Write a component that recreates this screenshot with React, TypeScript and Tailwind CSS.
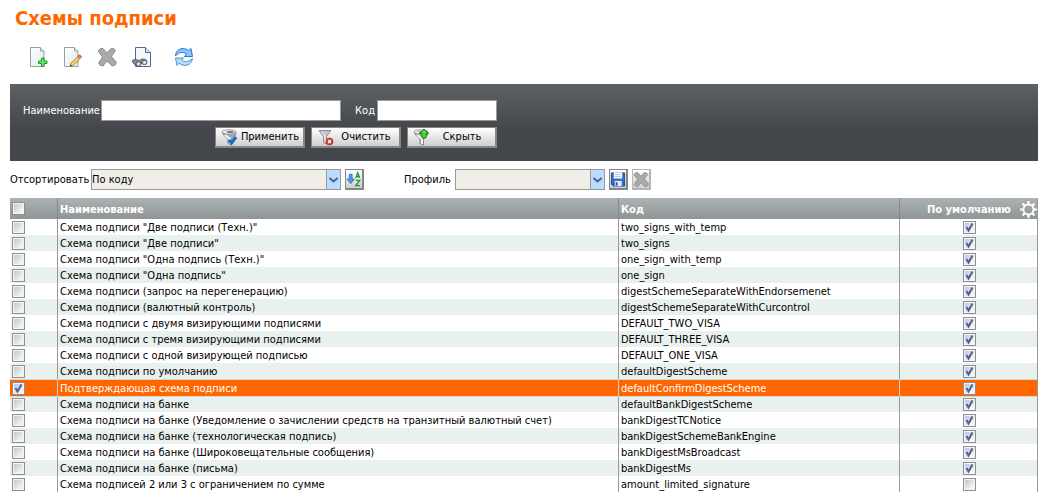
import React from "react";

const rows = [
  { name: 'Схема подписи "Две подписи (Техн.)"', code: "two_signs_with_temp", byDefault: true },
  { name: 'Схема подписи "Две подписи"', code: "two_signs", byDefault: true },
  { name: 'Схема подписи "Одна подпись (Техн.)"', code: "one_sign_with_temp", byDefault: true },
  { name: 'Схема подписи "Одна подпись"', code: "one_sign", byDefault: true },
  { name: "Схема подписи (запрос на перегенерацию)", code: "digestSchemeSeparateWithEndorsemenet", byDefault: true },
  { name: "Схема подписи (валютный контроль)", code: "digestSchemeSeparateWithCurcontrol", byDefault: true },
  { name: "Схема подписи с двумя визирующими подписями", code: "DEFAULT_TWO_VISA", byDefault: true },
  { name: "Схема подписи с тремя визирующими подписями", code: "DEFAULT_THREE_VISA", byDefault: true },
  { name: "Схема подписи с одной визирующей подписью", code: "DEFAULT_ONE_VISA", byDefault: true },
  { name: "Схема подписи по умолчанию", code: "defaultDigestScheme", byDefault: true },
  { name: "Подтверждающая схема подписи", code: "defaultConfirmDigestScheme", byDefault: true, selected: true },
  { name: "Схема подписи на банке", code: "defaultBankDigestScheme", byDefault: true },
  { name: "Схема подписи на банке (Уведомление о зачислении средств на транзитный валютный счет)", code: "bankDigestTCNotice", byDefault: true },
  { name: "Схема подписи на банке (технологическая подпись)", code: "bankDigestSchemeBankEngine", byDefault: true },
  { name: "Схема подписи на банке (Широковещательные сообщения)", code: "bankDigestMsBroadcast", byDefault: true },
  { name: "Схема подписи на банке (письма)", code: "bankDigestMs", byDefault: true },
  { name: "Схема подписей 2 или 3 с ограничением по сумме", code: "amount_limited_signature", byDefault: false },
];

function Sheet({ stroke, children }: { stroke: string; children?: React.ReactNode }) {
  return (
    <svg width="20" height="22" viewBox="0 0 20 22" fill="none">
      <defs>
        <linearGradient id="sheet" x1="0" y1="0" x2="1" y2="1">
          <stop offset="0" stopColor="#fff" />
          <stop offset="1" stopColor="#dfeaea" />
        </linearGradient>
      </defs>
      <path d="M1.500 1.500h10l3.500 3.500v15.500H1.500z" fill="url(#sheet)" stroke={stroke} />
      <path d="M11.500 1.500v3.500H15" fill="#e8efef" stroke={stroke} />
      {children}
    </svg>
  );
}

function CreateIcon() {
  return (
    <Sheet stroke="#8fa3a3">
      <path d="M12.500 12h2.500v3h3v2.500h-3v3h-2.500v-3h-3V15h3z" fill="#6fdc70" stroke="#18a02b" />
    </Sheet>
  );
}

function EditIcon() {
  return (
    <Sheet stroke="#8fa3a3">
      <path d="M7.500 20l.5-3 7-6.500 2 2-7 7z" fill="#f5d36a" stroke="#b08a34" />
      <path d="M14.500 10.500l1.500-1.500q2 0 2.500 2l-1.500 1.500z" fill="#ef8474" stroke="#c85a4b" />
      <path d="M7 20.500l.5-2 1.500 1.500z" fill="#333" />
    </Sheet>
  );
}

function ViewIcon() {
  return (
    <svg width="21" height="22" viewBox="0 0 21 22" fill="none">
      <path d="M4.500 1.500h10l5 5v14h-15z" fill="#f3f8fd" stroke="#4b6a9c" />
      <path d="M14.500 1.500v5h5" fill="#d5e3f3" stroke="#4b6a9c" />
      <path d="M1 15q1-2 4-1.500l3 1 3-1.500q4-.5 5 2l-1 3-4-1-4 3-4-2z" fill="#888" stroke="#555" strokeWidth=".8" />
      <ellipse cx="7.500" cy="18" rx="2.500" ry="2.200" fill="#c9d8e2" stroke="#444" strokeWidth=".8" />
      <ellipse cx="13.500" cy="16.500" rx="2.500" ry="2.200" fill="#c9d8e2" stroke="#444" strokeWidth=".8" />
      <path d="M7 18.500l1.500-1.500M13 17l1.500-1.500" stroke="#fff" />
    </svg>
  );
}

function CrossIcon({ size }: { size: number }) {
  return (
    <svg width={size} height={size} viewBox="0 0 20 20">
      <path
        d="M1 4Q3 .500 6 1.500L10 6l4-4.500q3-1 4.500 2L14.500 9.500l5 6q-1 3.500-4.500 3.500L10 14l-4 5q-3.500 0-4.500-3L5.500 10z"
        fill="#a9a9a9"
        stroke="#8d8d8d"
        strokeLinejoin="round"
      />
    </svg>
  );
}

function RefreshIcon() {
  return (
    <svg width="20" height="20" viewBox="0 0 20 20" strokeLinejoin="round">
      <path d="M1.500 9C1.500 2 9-.500 14.500 3.500l2.500-2 1.500 8h-8L12.500 7C9 4.500 5 5 1.500 9z" fill="#8cc4fb" stroke="#2a78d0" />
      <path d="M18.500 11.500c-1 7-8.500 9-13.500 4.500L3 18.500l-1.500-7.500h8L7.500 13c3 2.500 7 2 11-1.500z" fill="#b9dcfd" stroke="#4a90dd" />
    </svg>
  );
}

function Funnel({ children }: { children: React.ReactNode }) {
  return (
    <svg width="18" height="18" viewBox="0 0 18 18" className="shrink-0">
      <path d="M1.500 4l1 3 4.500 4v4.500l3.500 1.500V11l4-4 .5-3z" fill="#a8a8ad" stroke="#77777c" strokeWidth=".8" />
      <path d="M4 7l5 4v5" stroke="#f6f6f6" strokeWidth="2" fill="none" />
      <ellipse cx="8" cy="4" rx="7" ry="2.200" fill="#ececec" stroke="#8a8a8f" strokeWidth=".8" />
      <path d="M5 4q4 2 8.500 0-4-2-8.500 0z" fill="#66666b" />
      {children}
    </svg>
  );
}

function ApplyIcon() {
  return (
    <Funnel>
      <path d="M8 12l2.500 3L15 9" stroke="#1767cd" strokeWidth="3" fill="none" />
    </Funnel>
  );
}

function ClearIcon() {
  return (
    <svg width="18" height="18" viewBox="0 0 18 18" className="shrink-0">
      <path d="M2 2.500h12L9.500 8.500v7.500l-3-1.500v-6z" fill="#c4c4cc" stroke="#8c8c93" />
      <path d="M4.500 4L8 8v6" stroke="#f4f4f7" fill="none" />
      <circle cx="12.500" cy="13.500" r="3.500" fill="#d93636" stroke="#a51515" strokeWidth=".6" />
      <path d="M11 12l3 3m0-3l-3 3" stroke="#fff" strokeWidth="1.200" />
    </svg>
  );
}

function HideIcon() {
  return (
    <Funnel>
      <path d="M11 1l4.500 4.500H13V10H9V5.500H6.500z" fill="#4fdb3a" stroke="#14801a" />
    </Funnel>
  );
}

function SortIcon() {
  return (
    <svg width="17" height="18" viewBox="0 0 17 18">
      <path d="M3.500 4h3v5H9l-4 5-4-5h2.500z" fill="#4a9bee" stroke="#1a62b8" strokeWidth=".7" />
      <path d="M10.500 8l2-5.500 2 5.500M11 6.500h3" stroke="#1d9a33" strokeWidth="1.500" fill="none" />
      <path d="M10.500 10.500h4l-4 5.500h4.500" stroke="#1d9a33" strokeWidth="1.500" fill="none" />
    </svg>
  );
}

function SaveIcon() {
  return (
    <svg width="17" height="18" viewBox="0 0 17 18">
      <path d="M1.500 2.500h14v14h-12l-2-2z" fill="#2b6cc4" stroke="#164c99" />
      <path d="M4 2h9v6.500H4z" fill="#fff" />
      <path d="M5 4.500h7M5 6.500h7" stroke="#a8bfdc" />
      <path d="M5 11h7.500v5.500H5z" fill="#e6ebf2" />
      <path d="M6 12.500h2V16H6z" fill="#164c99" />
    </svg>
  );
}

function GearIcon() {
  return (
    <svg width="17" height="17" viewBox="0 0 17 17" fill="none" stroke="#fff">
      <circle cx="8.500" cy="8.500" r="5" strokeWidth="1.800" />
      <path
        d="M8.500 0v3.500M8.500 13.500V17M0 8.500h3.500M13.500 8.500H17M2.500 2.500L5 5M12 12l2.500 2.500M2.500 14.500L5 12M12 5l2.500-2.500"
        strokeWidth="2.200"
      />
    </svg>
  );
}

function Checkbox({ label, checked }: { label: string; checked?: boolean }) {
  return (
    <span className="inline-grid pt-px align-top">
      <input
        type="checkbox"
        aria-label={label}
        defaultChecked={checked}
        className="peer col-start-1 row-start-1 size-[13px] appearance-none border border-[#8e8f8f] bg-linear-to-br from-[#bcc1c8] to-[#f6f6f6] to-80% shadow-[inset_0_0_0_1px_#f4f4f4]"
      />
      <svg
        width="13"
        height="13"
        viewBox="0 0 13 13"
        className="pointer-events-none col-start-1 row-start-1 hidden peer-checked:block"
      >
        <path d="M3.500 6l2 3.500 4-7" fill="none" stroke="#4b5f9e" strokeWidth="2" />
      </svg>
    </span>
  );
}

function FilterButton({ icon, children }: { icon: React.ReactNode; children: React.ReactNode }) {
  return (
    <button className="flex h-[21px] w-[90px] items-center border border-r-2 border-b-2 border-[#858585] bg-linear-to-b from-white to-[#cfcfcf] pr-0.5 pl-[5px] text-black">
      {icon}
      <span className="flex-1 text-center">{children}</span>
    </button>
  );
}

function SquareButton({ label, disabled, children }: { label: string; disabled?: boolean; children: React.ReactNode }) {
  return (
    <button
      aria-label={label}
      disabled={disabled}
      className="flex h-[21px] w-[19px] items-center justify-center border border-r-2 border-b-2 border-[#858585] bg-linear-to-b from-white to-[#cfcfcf] disabled:border-[#b5b5b5]"
    >
      {children}
    </button>
  );
}

function Dropdown({ id, options, className }: { id: string; options: string[]; className: string }) {
  return (
    <span className={`grid h-[21px] ${className}`}>
      <select
        id={id}
        className="col-start-1 row-start-1 w-full appearance-none border border-[#999] bg-[#f1eee8] pr-4"
      >
        {options.map((option) => (
          <option key={option}>{option}</option>
        ))}
      </select>
      <span className="pointer-events-none col-start-1 row-start-1 flex w-[15px] items-center justify-center justify-self-end border border-[#999] bg-[#b8dbff]">
        <svg width="9" height="6" viewBox="0 0 9 6">
          <path d="M.5 1l4 3.500L8.500 1" fill="none" stroke="#4d6185" strokeWidth="2" />
        </svg>
      </span>
    </span>
  );
}

export default function App() {
  return (
    <main className="bg-white pl-[10px] font-['DejaVu_Sans_Condensed','DejaVu_Sans',sans-serif] text-[11px] leading-4 text-black">
      <h1 className="pt-1.5 pl-[5px] text-[20px] leading-6 font-bold text-[#ff6600]">Схемы подписи</h1>

      <div className="flex h-[54px] items-center gap-3.5 pl-[19px]">
        <button aria-label="Создать"><CreateIcon /></button>
        <button aria-label="Изменить"><EditIcon /></button>
        <button aria-label="Удалить"><CrossIcon size={20} /></button>
        <button aria-label="Просмотр"><ViewIcon /></button>
        <button aria-label="Обновить" className="ml-2"><RefreshIcon /></button>
      </div>

      <form className="flex h-[77px] flex-col gap-1.5 bg-linear-to-b from-[#5c6165] to-[#43474b] to-60% pt-4 pl-[13px] text-white">
        <div className="flex items-center">
          <label htmlFor="name" className="w-[78px]">Наименование</label>
          <input id="name" className="h-[21px] w-60 border border-[#999] bg-white text-black" />
          <label htmlFor="code" className="w-9 pr-0.5 text-right">Код</label>
          <input id="code" className="h-[21px] w-[120px] border border-[#999] bg-white text-black" />
        </div>
        <div className="flex w-[474px] justify-end gap-1.5">
          <FilterButton icon={<ApplyIcon />}>Применить</FilterButton>
          <FilterButton icon={<ClearIcon />}>Очистить</FilterButton>
          <FilterButton icon={<HideIcon />}>Скрыть</FilterButton>
        </div>
      </form>

      <div className="flex h-[37px] items-center gap-1">
        <label htmlFor="sort" className="w-[77px]">Отсортировать</label>
        <Dropdown id="sort" options={["По коду", "По наименованию"]} className="w-[250px]" />
        <SquareButton label="Порядок сортировки"><SortIcon /></SquareButton>
        <label htmlFor="profile" className="ml-9 w-[47px]">Профиль</label>
        <Dropdown id="profile" options={[""]} className="w-[150px]" />
        <SquareButton label="Сохранить профиль"><SaveIcon /></SquareButton>
        <SquareButton label="Удалить профиль" disabled><CrossIcon size={17} /></SquareButton>
      </div>

      <table className="w-full table-fixed border-separate border-spacing-0 border-r border-[#999]">
        <thead>
          <tr className="h-[21px] bg-linear-to-b from-[#adb2b5] to-[#8f9497] text-left text-white">
            <th className="w-12 border-r border-[#85898c] p-0 pl-0.5"><Checkbox label="Выбрать все" /></th>
            <th className="border-r border-[#85898c] p-0 pt-0.5 pl-0.5">Наименование</th>
            <th className="w-[281px] border-r border-[#85898c] p-0 pt-0.5 pl-0.5">Код</th>
            <th className="w-[137px] p-0 pt-0.5">
              <div className="flex items-center justify-end gap-[9px]">
                По умолчанию
                <button aria-label="Настройки"><GearIcon /></button>
              </div>
            </th>
          </tr>
        </thead>
        <tbody>
          {rows.map((row) => (
            <tr
              key={row.code}
              className={
                row.selected
                  ? "relative h-[17px] bg-[#ff6600] text-white shadow-[0_1px_0_#d5d5d5] *:border-t *:border-[#d5d5d5]"
                  : "h-4 *:border-[#999] even:bg-[#e8f1ee]"
              }
            >
              <td className="border-r p-0 pl-0.5 leading-none"><Checkbox label={row.name} checked={row.selected} /></td>
              <td className="truncate border-r p-0 pt-px pl-0.5 leading-[15px]">{row.name}</td>
              <td className="truncate border-r p-0 pt-px pl-0.5 leading-[15px]">{row.code}</td>
              <td className="p-0 pl-0.5 text-center leading-none"><Checkbox label={`По умолчанию: ${row.code}`} checked={row.byDefault} /></td>
            </tr>
          ))}
        </tbody>
      </table>
    </main>
  );
}
